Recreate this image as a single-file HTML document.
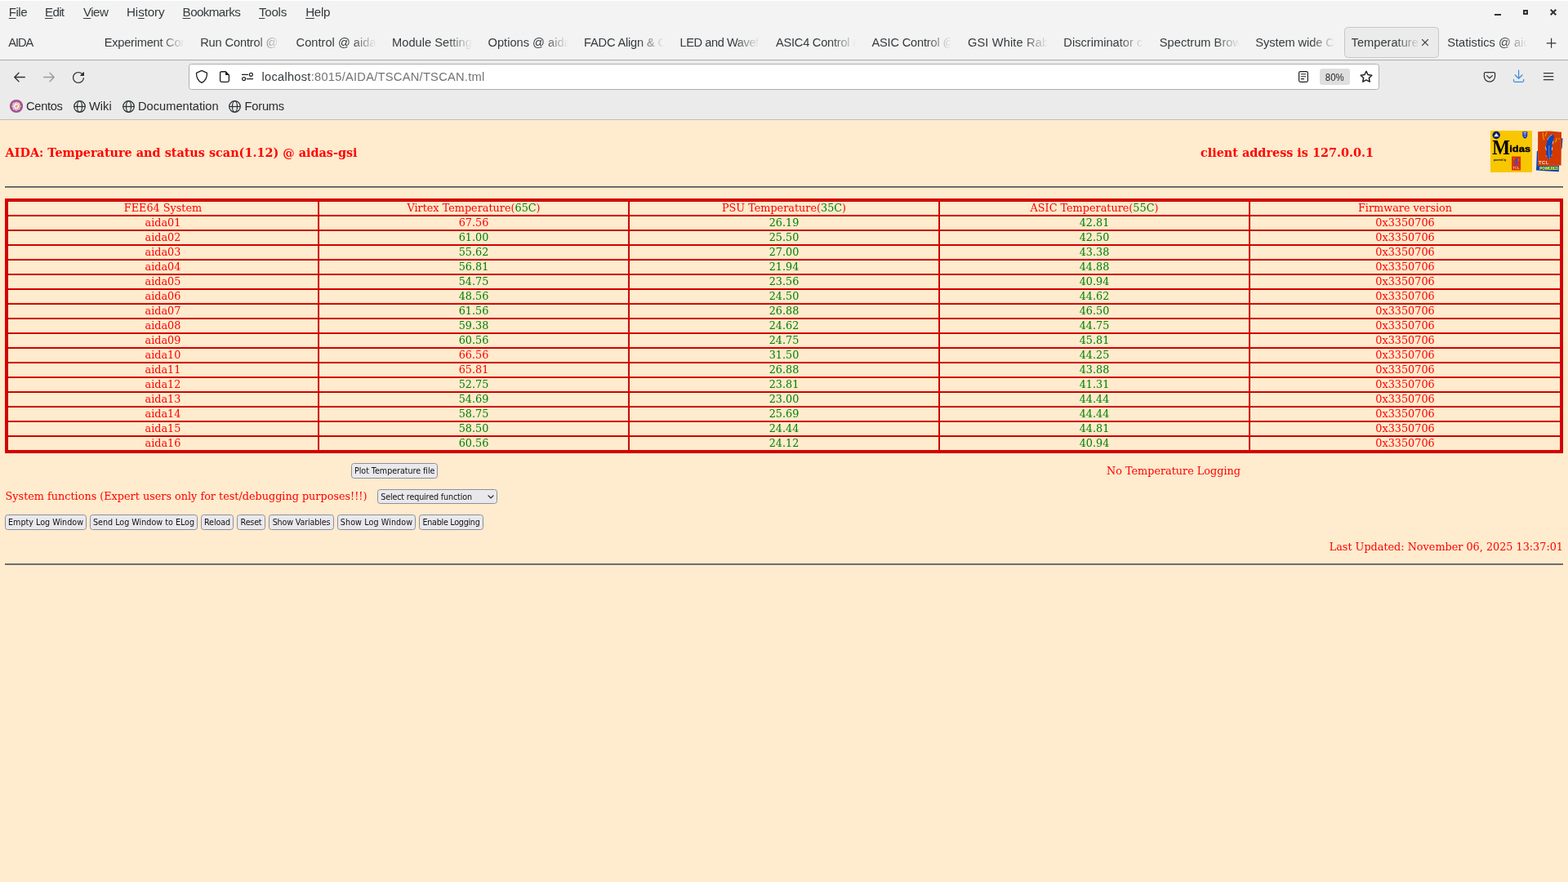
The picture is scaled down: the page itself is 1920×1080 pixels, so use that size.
<!DOCTYPE html>
<html lang="en">
<head>
<meta charset="utf-8">
<title>Temperature and status scan @ aidas-gsi</title>
<style>
*{box-sizing:border-box}
html,body{margin:0;padding:0;width:1920px;height:1080px;overflow:hidden;background:#ffebcd}
body{position:relative;font-family:"Liberation Sans",sans-serif;color:#363b3e}
.abs{position:absolute}
/* ---------- browser chrome ---------- */
#chrome{will-change:transform;position:absolute;left:0;top:0;width:1920px;height:147px;background:#ebebeb}
#titlebar{position:absolute;left:0;top:0;width:1920px;height:73px;background:#f3f3f3}
#topline{position:absolute;left:0;top:0;width:1920px;height:1px;background:#ffffff}
#tabsep{position:absolute;left:0;top:73px;width:1920px;height:1px;background:#ababab}
#chromesep{position:absolute;left:0;top:146px;width:1920px;height:1px;background:#bdbdbd}
.menu{position:absolute;top:5px;height:20px;line-height:20px;font-size:15.2px;white-space:pre;color:#363b3e}
.menu u{text-decoration:underline;text-underline-offset:2px;text-decoration-thickness:1px}
.tab{position:absolute;top:33px;width:117px;height:37px;overflow:hidden}
.tab .tl{position:absolute;left:10.2px;top:9px;height:20px;line-height:20px;font-size:14.67px;white-space:pre;color:#363b3e;width:99px;overflow:hidden;
 -webkit-mask-image:linear-gradient(to right,#000 0,#000 68px,transparent 98px);mask-image:linear-gradient(to right,#000 0,#000 68px,transparent 98px)}
.tab.active{left:1646px;width:116px;height:38px;background:#ebebeb;border:1px solid #c6c6cc;border-radius:4.5px}
.tab.active .tl{left:7.6px;top:8px;width:84px;-webkit-mask-image:linear-gradient(to right,#000 0,#000 54px,transparent 84px);mask-image:linear-gradient(to right,#000 0,#000 54px,transparent 84px)}
#urlbar{position:absolute;left:231px;top:78px;width:1458px;height:32px;background:#fff;border:1px solid #afafad;border-radius:3.5px}
#url{letter-spacing:0.26px;position:absolute;left:320.5px;top:84px;height:20px;line-height:20px;font-size:14.67px;white-space:pre;color:#737373}
#url b{font-weight:400;color:#363b3e}
#zoom{position:absolute;left:1616px;top:84px;width:37px;height:20px;border-radius:3px;background:#dfdfdf;font-size:12.3px;line-height:22px;text-align:center;color:#1e2022}
#zoom span{display:inline-block;transform:scaleX(0.93);transform-origin:50% 50%}
.bm{position:absolute;top:120px;height:20px;line-height:20px;font-size:14.67px;white-space:pre;color:#2a2a2e}
svg{position:absolute;overflow:visible}
/* ---------- page ---------- */
#page{will-change:transform;position:absolute;left:0;top:147px;width:1920px;height:933px;background:#ffebcd;font-family:"DejaVu Serif","Liberation Serif",serif;font-size:12.8px;color:#ff0000}
.g{color:#008000}
#h1{position:absolute;left:6.5px;top:31px;font-size:14.4px;font-weight:700;line-height:18px;white-space:pre}
#h2{position:absolute;left:1470px;top:31px;font-size:14.4px;font-weight:700;line-height:18px;white-space:pre}
.hr{position:absolute;left:6px;width:1908px;height:2px;background:linear-gradient(to bottom,#58585b 0,#58585b 1px,#828282 1px,#828282 2px)}
#tblo{position:absolute;left:6px;top:96px;width:1908px;height:312px;border:1px solid;border-color:#ff0000 #aa0000 #aa0000 #ff0000;padding:0}
#tbli{width:1906px;height:310px;border:1px solid;border-color:#aa0000 #ff0000 #ff0000 #aa0000}
#t{border-collapse:separate;border-spacing:0;table-layout:fixed;width:1904px;height:308px;border:1px solid;border-color:#ff0000 #aa0000 #aa0000 #ff0000}
#t td{height:18px;padding:0;border:1px solid;border-color:#aa0000 #ff0000 #ff0000 #aa0000;text-align:center;line-height:16px;font-size:12.8px;white-space:pre;overflow:hidden}
.btn{position:absolute;height:19px;border:1px solid #8f8f9d;border-radius:3.5px;background:#e9e9ed;color:#111;font-family:"DejaVu Sans","Liberation Sans",sans-serif;font-size:9.6px;line-height:17px;text-align:center;white-space:pre}
.txt{position:absolute;white-space:pre;line-height:16px;height:16px}
</style>
</head>
<body>
<div id="chrome">
<div id="titlebar"></div>
<div id="topline"></div>
<div class="menu" style="left:10.8px;letter-spacing:-0.55px"><u>F</u>ile</div>
<div class="menu" style="left:55px;letter-spacing:-0.7px"><u>E</u>dit</div>
<div class="menu" style="left:102px;letter-spacing:-0.6px"><u>V</u>iew</div>
<div class="menu" style="left:155px;letter-spacing:-0.1px">Hi<u>s</u>tory</div>
<div class="menu" style="left:223.6px;letter-spacing:-0.6px"><u>B</u>ookmarks</div>
<div class="menu" style="left:317px;letter-spacing:-0.3px"><u>T</u>ools</div>
<div class="menu" style="left:374.2px;letter-spacing:-0.3px"><u>H</u>elp</div>
<!-- window controls -->
<div class="abs" style="left:1830px;top:17px;width:8px;height:2px;background:#2e3436"></div>
<div class="abs" style="left:1865px;top:12px;width:6px;height:6px;border:2px solid #2e3436"></div>
<svg style="left:1897px;top:10px" width="10" height="10" viewBox="0 0 10 10"><path d="M1.7 1.7 L8.3 8.3 M8.3 1.7 L1.7 8.3" stroke="#2e3436" stroke-width="2" fill="none"/></svg>
<div class="tab" style="left:0.00px"><span class="tl" style="letter-spacing:-1px">AIDA</span></div>
<div class="tab" style="left:117.47px"><span class="tl" style="letter-spacing:-0.25px">Experiment Con</span></div>
<div class="tab" style="left:234.94px"><span class="tl" style="letter-spacing:-0.15px">Run Control @</span></div>
<div class="tab" style="left:352.41px"><span class="tl">Control @ aida</span></div>
<div class="tab" style="left:469.88px"><span class="tl">Module Setting</span></div>
<div class="tab" style="left:587.35px"><span class="tl">Options @ aida</span></div>
<div class="tab" style="left:704.82px"><span class="tl" style="letter-spacing:-0.19px">FADC Align &amp; C</span></div>
<div class="tab" style="left:822.29px"><span class="tl" style="letter-spacing:-0.45px">LED and Wavef</span></div>
<div class="tab" style="left:939.76px"><span class="tl" style="letter-spacing:-0.25px">ASIC4 Control @</span></div>
<div class="tab" style="left:1057.23px"><span class="tl" style="letter-spacing:-0.2px">ASIC Control @</span></div>
<div class="tab" style="left:1174.70px"><span class="tl" style="letter-spacing:0.12px">GSI White Rabb</span></div>
<div class="tab" style="left:1292.17px"><span class="tl">Discriminator c</span></div>
<div class="tab" style="left:1409.64px"><span class="tl">Spectrum Brow</span></div>
<div class="tab" style="left:1527.11px"><span class="tl" style="letter-spacing:-0.1px">System wide C</span></div>
<div class="tab active"><span class="tl">Temperature</span></div>
<div class="tab" style="left:1762.05px"><span class="tl">Statistics @ aid</span></div>
<svg style="left:1740px;top:47px" width="10" height="10" viewBox="0 0 10 10"><path d="M1.2 1.2 L8.8 8.8 M8.8 1.2 L1.2 8.8" stroke="#2e3436" stroke-width="1.1" fill="none"/></svg>
<svg style="left:1893px;top:46px" width="13" height="13" viewBox="0 0 13 13"><path d="M6.6 0.8 V12.8 M0.8 6.8 H12.4" stroke="#2e3436" stroke-width="1.2" fill="none"/></svg>
<div id="tabsep"></div>
<!-- nav buttons -->
<svg style="left:16px;top:87px" width="16" height="16" viewBox="0 0 16 16"><path d="M14.3 7.5 H1.9 M7 2.3 L1.8 7.5 L7 12.7" stroke="#2e3436" stroke-width="1.35" fill="none" stroke-linecap="round" stroke-linejoin="round"/></svg>
<svg style="left:52px;top:87px" width="16" height="16" viewBox="0 0 16 16"><path d="M1.7 7.5 H14.1 M9 2.3 L14.2 7.5 L9 12.7" stroke="#9a9a9a" stroke-width="1.35" fill="none" stroke-linecap="round" stroke-linejoin="round"/></svg>
<svg style="left:88px;top:87px" width="16" height="16" viewBox="0 0 16 16"><path fill="#2e3436" d="M10.707 6 14.7 6l.3-.3 0-3.993a.5.5 0 0 0-.854-.354l-1.459 1.459A6.95 6.95 0 0 0 8 1C4.141 1 1 4.141 1 8s3.141 7 7 7a6.97 6.97 0 0 0 6.968-6.322.626.626 0 0 0-.562-.682.635.635 0 0 0-.682.562A5.726 5.726 0 0 1 8 13.75c-3.171 0-5.75-2.579-5.75-5.75S4.829 2.25 8 2.25a5.71 5.71 0 0 1 3.805 1.445l-1.451 1.451a.5.5 0 0 0 .353.854z"/></svg>
<!-- url bar -->
<div id="urlbar"></div>
<svg style="left:239px;top:85px" width="16" height="18" viewBox="0 0 16 18"><path d="M8 1.4 L14.5 4.4 C14.7 9.8 12.6 13.7 8 16.4 C3.4 13.7 1.3 9.8 1.5 4.4 Z" stroke="#1f1f1f" stroke-width="1.3" fill="none" stroke-linejoin="round"/></svg>
<svg style="left:268px;top:86px" width="14" height="16" viewBox="0 0 14 16"><path d="M3.2 1.7 H8.2 L12.4 5.9 V12.6 A1.8 1.8 0 0 1 10.6 14.4 H3.4 A1.8 1.8 0 0 1 1.6 12.6 V3.3 A1.6 1.6 0 0 1 3.2 1.7 Z" stroke="#1f1f1f" stroke-width="1.35" fill="none" stroke-linejoin="round"/><path d="M8 1.5 L12.6 6.1 H9.2 A1.2 1.2 0 0 1 8 4.9 Z" fill="#1f1f1f"/></svg>
<svg style="left:295px;top:88px" width="16" height="12" viewBox="0 0 16 12"><path d="M1.4 3.3 H8.6 M7.4 8.6 H14.6" stroke="#1f1f1f" stroke-width="1.2" fill="none" stroke-linecap="round"/><circle cx="12.4" cy="3.3" r="2" stroke="#1f1f1f" stroke-width="1.2" fill="none"/><circle cx="3.6" cy="8.6" r="2" stroke="#1f1f1f" stroke-width="1.2" fill="none"/></svg>
<div id="url"><b>localhost</b>:8015/AIDA/TSCAN/TSCAN.tml</div>
<svg style="left:1589px;top:86px" width="14" height="16" viewBox="0 0 14 16"><rect x="1.6" y="1.6" width="10.8" height="12.8" rx="1.8" stroke="#1f1f1f" stroke-width="1.2" fill="none"/><path d="M4.2 4.7 H9.8 M4.2 7.7 H9.8 M4.2 10.6 H7.6" stroke="#1f1f1f" stroke-width="1.1" fill="none" stroke-linecap="round"/></svg>
<div id="zoom"><span>80%</span></div>
<svg style="left:1664px;top:85px" width="18" height="18" viewBox="0 0 18 18"><path d="M9 2.2 L11.05 6.55 L15.8 7.2 L12.35 10.5 L13.2 15.2 L9 12.9 L4.8 15.2 L5.65 10.5 L2.2 7.2 L6.95 6.55 Z" stroke="#1f1f1f" stroke-width="1.5" fill="none" stroke-linejoin="round"/></svg>
<!-- right toolbar -->
<svg style="left:1816px;top:87px" width="16" height="15" viewBox="0 0 16 15"><path d="M2.8 1.7 H13.2 A1.4 1.4 0 0 1 14.6 3.1 V6.6 A6.6 6.6 0 0 1 1.4 6.6 V3.1 A1.4 1.4 0 0 1 2.8 1.7 Z" stroke="#2e3436" stroke-width="1.25" fill="none"/><path d="M4.6 5.6 L8 8.8 L11.4 5.6" stroke="#2e3436" stroke-width="1.25" fill="none" stroke-linecap="round" stroke-linejoin="round"/></svg>
<svg style="left:1852px;top:85px" width="16" height="17" viewBox="0 0 16 17"><path d="M7.6 1.2 V11 M3.2 6.8 L7.6 11.2 L12 6.8" stroke="#3f8ce0" stroke-width="1.25" fill="none" stroke-linecap="round" stroke-linejoin="round"/><path d="M1.5 12.4 V13.8 A1.6 1.6 0 0 0 3.1 15.4 H12.1 A1.6 1.6 0 0 0 13.7 13.8 V12.4" stroke="#3f8ce0" stroke-width="1.25" fill="none" stroke-linecap="round"/></svg>
<svg style="left:1889px;top:88px" width="14" height="12" viewBox="0 0 14 12"><path d="M1.4 1.6 H12.8 M1.4 5.7 H12.8 M1.4 9.7 H12.8" stroke="#2e3436" stroke-width="1.25" fill="none" stroke-linecap="round"/></svg>
<!-- bookmarks -->
<svg style="left:12px;top:122px" width="16" height="16" viewBox="0 0 16 16"><circle cx="8" cy="8" r="8.1" fill="#a3518f"/><g fill="#ffffff"><circle cx="8.00" cy="4.00" r="1.6"/><circle cx="10.83" cy="5.17" r="1.6"/><circle cx="12.00" cy="8.00" r="1.6"/><circle cx="10.83" cy="10.83" r="1.6"/><circle cx="8.00" cy="12.00" r="1.6"/><circle cx="5.17" cy="10.83" r="1.6"/><circle cx="4.00" cy="8.00" r="1.6"/><circle cx="5.17" cy="5.17" r="1.6"/><circle cx="8" cy="8" r="3.1"/></g><g fill="#ad5b9b"><circle cx="8.00" cy="4.00" r="0.8"/><circle cx="12.00" cy="8.00" r="0.8"/><circle cx="10.83" cy="10.83" r="0.8"/><circle cx="8.00" cy="12.00" r="0.8"/><circle cx="5.17" cy="10.83" r="0.8"/><circle cx="4.00" cy="8.00" r="0.8"/><circle cx="5.17" cy="5.17" r="0.8"/></g><g fill="#c58ab8"><circle cx="8.77" cy="6.15" r="0.45"/><circle cx="9.85" cy="7.23" r="0.45"/><circle cx="9.85" cy="8.77" r="0.45"/><circle cx="8.77" cy="9.85" r="0.45"/><circle cx="7.23" cy="9.85" r="0.45"/><circle cx="6.15" cy="8.77" r="0.45"/><circle cx="6.15" cy="7.23" r="0.45"/><circle cx="7.23" cy="6.15" r="0.45"/></g><rect x="6.8" y="7.1" width="2.3" height="2.3" rx="0.5" fill="#f0a21c"/><path d="M8.8 7.4 L10.6 5.4" stroke="#f0a21c" stroke-width="0.9"/><path d="M10.2 4.6 L12 4.1 L11.5 5.9 Z" fill="#f0a21c"/></svg>
<div class="bm" style="left:32px;letter-spacing:-0.3px">Centos</div>
<svg class="globe" style="left:90px;top:123px" width="15" height="15" viewBox="0 0 15 15"><g stroke="#2e3436" stroke-width="1.25" fill="none"><circle cx="7.5" cy="7.5" r="6.8"/><ellipse cx="7.5" cy="7.5" rx="3" ry="6.8"/><path d="M0.7 7.5 H14.3"/></g></svg>
<div class="bm" style="left:109px">Wiki</div>
<svg class="globe" style="left:150px;top:123px" width="15" height="15" viewBox="0 0 15 15"><g stroke="#2e3436" stroke-width="1.25" fill="none"><circle cx="7.5" cy="7.5" r="6.8"/><ellipse cx="7.5" cy="7.5" rx="3" ry="6.8"/><path d="M0.7 7.5 H14.3"/></g></svg>
<div class="bm" style="left:169px">Documentation</div>
<svg class="globe" style="left:280px;top:123px" width="15" height="15" viewBox="0 0 15 15"><g stroke="#2e3436" stroke-width="1.25" fill="none"><circle cx="7.5" cy="7.5" r="6.8"/><ellipse cx="7.5" cy="7.5" rx="3" ry="6.8"/><path d="M0.7 7.5 H14.3"/></g></svg>
<div class="bm" style="left:299.5px;letter-spacing:-0.2px">Forums</div>
<div id="chromesep"></div>
</div>
<div id="page">
<div id="h1">AIDA: Temperature and status scan(1.12) @ aidas-gsi</div>
<div id="h2">client address is 127.0.0.1</div>
<svg id="midas" style="left:1825px;top:13px" width="51" height="51" viewBox="0 0 51 51">
<rect x="0" y="0" width="51" height="51" fill="#f8c700"/>
<circle cx="7.2" cy="5.5" r="4.7" fill="#0c1d6c"/>
<path d="M7.2 3 L10.2 7.3 H4.2 Z" fill="#eef2f6"/>
<path d="M39.3 1.2 H45.3 V5.4 C45.3 7.8 43.9 9 42.3 9.7 C40.7 9 39.3 7.8 39.3 5.4 Z" fill="#1d38c4"/>
<path d="M40.6 2.6 H44 M40.8 4.2 H43.8 M41.4 6.6 H43.2" stroke="#cfd6f2" stroke-width="0.9" fill="none"/>
<text fill="#000" font-weight="700"><tspan x="2.2" y="28.6" font-family="'Liberation Serif','DejaVu Serif',serif" font-size="24.4" textLength="21.8" lengthAdjust="spacingAndGlyphs">M</tspan><tspan x="23.2" y="26.3" font-family="'Liberation Sans','DejaVu Sans',sans-serif" font-size="11.4" stroke="#000" stroke-width="0.38" textLength="26" lengthAdjust="spacingAndGlyphs">idas</tspan></text>
<text x="3.9" y="37" font-family="'Liberation Sans','DejaVu Sans',sans-serif" font-weight="700" font-size="3.5" fill="#000" textLength="15.4" lengthAdjust="spacingAndGlyphs">powered by</text>
<rect x="26.1" y="31.6" width="11" height="16.9" fill="#d5320f"/>
<path d="M32.6 33.6 C31 34.4 30.2 36.5 30.3 38.6 C30.3 40.8 30.8 42.6 31.6 43.6 C32.4 42.4 32.8 40.6 32.7 38.8 C33.1 37.2 33.4 35.2 32.6 33.6 Z" fill="#2a55c8"/>
<path d="M28.6 33 L29.2 35.6 M34.6 34.6 L34.2 36.8" stroke="#f0a21a" stroke-width="0.6" fill="none"/>
<text x="27.2" y="46.7" font-family="'Liberation Sans','DejaVu Sans',sans-serif" font-weight="700" font-size="2.6" fill="#e9b6a0" textLength="8.6" lengthAdjust="spacingAndGlyphs">TCL</text>
</svg>
<svg id="tcl" style="left:1881px;top:13px" width="33" height="51" viewBox="0 0 33 51">
<path d="M0.9 25 L2.3 24.8 L2.3 43 L28 42.6 L27.8 50.3 L14 49.4 L0 48.6 L0.3 43 Z" fill="#0a43b0"/>
<path d="M30.6 9.6 L32.5 9.2 L31.6 22 L30.5 22.2 Z" fill="#0a43b0"/>
<path d="M2.2 1.3 L16 0.6 L31 1.7 L30.6 42.4 L2.1 42.9 Z" fill="#d23a02"/>
<path d="M20.3 4.8 C17 5 13.6 8.4 13.2 13 C13 16 12.5 18 11.3 19.4 C12.6 22 12.8 26.5 12 30.2 C13.5 32 15 34 16.2 35.7 C17.5 33.2 18.8 31 19.4 29.2 C18.8 26 19 22 19.8 19.8 C19 17.4 19.6 15 21 12.4 C20.6 11 21 9.6 22 8.6 C21.8 6.8 21.2 5.6 20.3 4.8 Z" fill="#0b46b6"/>
<path d="M19.6 5 C17 6 14.6 8.6 13.9 11.6" stroke="#d9e4f4" stroke-width="0.7" fill="none"/>
<path d="M11.3 19.4 L12.3 24 M12 30.2 L13.4 31.6 M21 12.6 L20.2 16.4 M19.8 20 L19.4 24 M19.4 29.2 L18.6 30.6" stroke="#f3dede" stroke-width="0.8" fill="none"/>
<path d="M15.9 18 C15.6 24 15.8 30 16.4 35" stroke="#c9a8c8" stroke-width="0.6" fill="none"/>
<path d="M8.2 2 C8 5.4 8.6 8.6 9.6 11.4 M13.4 1.8 C12 3.6 11.2 5.4 10.9 7.2" stroke="#f0a000" stroke-width="1.1" fill="none"/>
<path d="M25.2 8.8 C25 11 24.4 12.8 23.4 14.4 M28.4 9.2 L28 10.8" stroke="#f2b400" stroke-width="1" fill="none"/>
<text x="3.1" y="40.7" font-family="'Liberation Sans','DejaVu Sans',sans-serif" font-weight="700" font-size="5.8" fill="#f6e7da" textLength="12.2" lengthAdjust="spacing">TCL</text>
<text x="4.3" y="48" font-family="'Liberation Sans','DejaVu Sans',sans-serif" font-weight="700" font-size="5.3" fill="#fbfb00" stroke="#fbfb00" stroke-width="0.15" textLength="22.8" lengthAdjust="spacingAndGlyphs">POWERED</text>
</svg>
<div class="hr" style="top:81px"></div>
<div id="tblo"><div id="tbli"><table id="t" cellspacing="0" cellpadding="0">
<colgroup><col style="width:381px"><col style="width:380px"><col style="width:380px"><col style="width:380px"><col style="width:381px"></colgroup>
<tr><td>FEE64 System</td><td>Virtex Temperature(<span class="g">65C</span>)</td><td>PSU Temperature(<span class="g">35C</span>)</td><td>ASIC Temperature(<span class="g">55C</span>)</td><td>Firmware version</td></tr>
<tr><td>aida01</td><td>67.56</td><td class="g">26.19</td><td class="g">42.81</td><td>0x3350706</td></tr>
<tr><td>aida02</td><td class="g">61.00</td><td class="g">25.50</td><td class="g">42.50</td><td>0x3350706</td></tr>
<tr><td>aida03</td><td class="g">55.62</td><td class="g">27.00</td><td class="g">43.38</td><td>0x3350706</td></tr>
<tr><td>aida04</td><td class="g">56.81</td><td class="g">21.94</td><td class="g">44.88</td><td>0x3350706</td></tr>
<tr><td>aida05</td><td class="g">54.75</td><td class="g">23.56</td><td class="g">40.94</td><td>0x3350706</td></tr>
<tr><td>aida06</td><td class="g">48.56</td><td class="g">24.50</td><td class="g">44.62</td><td>0x3350706</td></tr>
<tr><td>aida07</td><td class="g">61.56</td><td class="g">26.88</td><td class="g">46.50</td><td>0x3350706</td></tr>
<tr><td>aida08</td><td class="g">59.38</td><td class="g">24.62</td><td class="g">44.75</td><td>0x3350706</td></tr>
<tr><td>aida09</td><td class="g">60.56</td><td class="g">24.75</td><td class="g">45.81</td><td>0x3350706</td></tr>
<tr><td>aida10</td><td>66.56</td><td class="g">31.50</td><td class="g">44.25</td><td>0x3350706</td></tr>
<tr><td>aida11</td><td>65.81</td><td class="g">26.88</td><td class="g">43.88</td><td>0x3350706</td></tr>
<tr><td>aida12</td><td class="g">52.75</td><td class="g">23.81</td><td class="g">41.31</td><td>0x3350706</td></tr>
<tr><td>aida13</td><td class="g">54.69</td><td class="g">23.00</td><td class="g">44.44</td><td>0x3350706</td></tr>
<tr><td>aida14</td><td class="g">58.75</td><td class="g">25.69</td><td class="g">44.44</td><td>0x3350706</td></tr>
<tr><td>aida15</td><td class="g">58.50</td><td class="g">24.44</td><td class="g">44.81</td><td>0x3350706</td></tr>
<tr><td>aida16</td><td class="g">60.56</td><td class="g">24.12</td><td class="g">40.94</td><td>0x3350706</td></tr>
</table></div></div>
<div class="btn" style="left:430px;top:420px;width:106px;letter-spacing:-0.06px;text-indent:0.4px">Plot Temperature file</div>
<div class="txt" style="left:1355px;top:422px">No Temperature Logging</div>
<div class="txt" style="left:6.6px;top:453px">System functions (Expert users only for test/debugging purposes!!!)</div>
<div class="btn" id="sel" style="left:462px;top:452px;width:147px;height:18px;line-height:18.4px;text-align:left;padding-left:3.2px;letter-spacing:-0.14px">Select required function</div>
<svg style="left:597px;top:459px" width="8" height="5" viewBox="0 0 8 5"><path d="M1 0.9 L4 3.9 L7 0.9" stroke="#1c1c1c" stroke-width="1.25" fill="none" stroke-linecap="round" stroke-linejoin="round"/></svg>
<div class="btn" style="left:6px;top:483px;width:100px">Empty Log Window</div>
<div class="btn" style="left:110px;top:483px;width:132px">Send Log Window to ELog</div>
<div class="btn" style="left:246px;top:483px;width:40px;letter-spacing:-0.1px">Reload</div>
<div class="btn" style="left:290px;top:483px;width:35px;letter-spacing:-0.2px">Reset</div>
<div class="btn" style="left:329px;top:483px;width:80px;letter-spacing:-0.15px">Show Variables</div>
<div class="btn" style="left:413px;top:483px;width:96px;letter-spacing:0.1px">Show Log Window</div>
<div class="btn" style="left:513px;top:483px;width:79px;letter-spacing:-0.27px">Enable Logging</div>
<div class="txt" style="right:6px;top:515px">Last Updated: November 06, 2025 13:37:01</div>
<div class="hr" style="top:543px"></div>
</div>
</body>
</html>
